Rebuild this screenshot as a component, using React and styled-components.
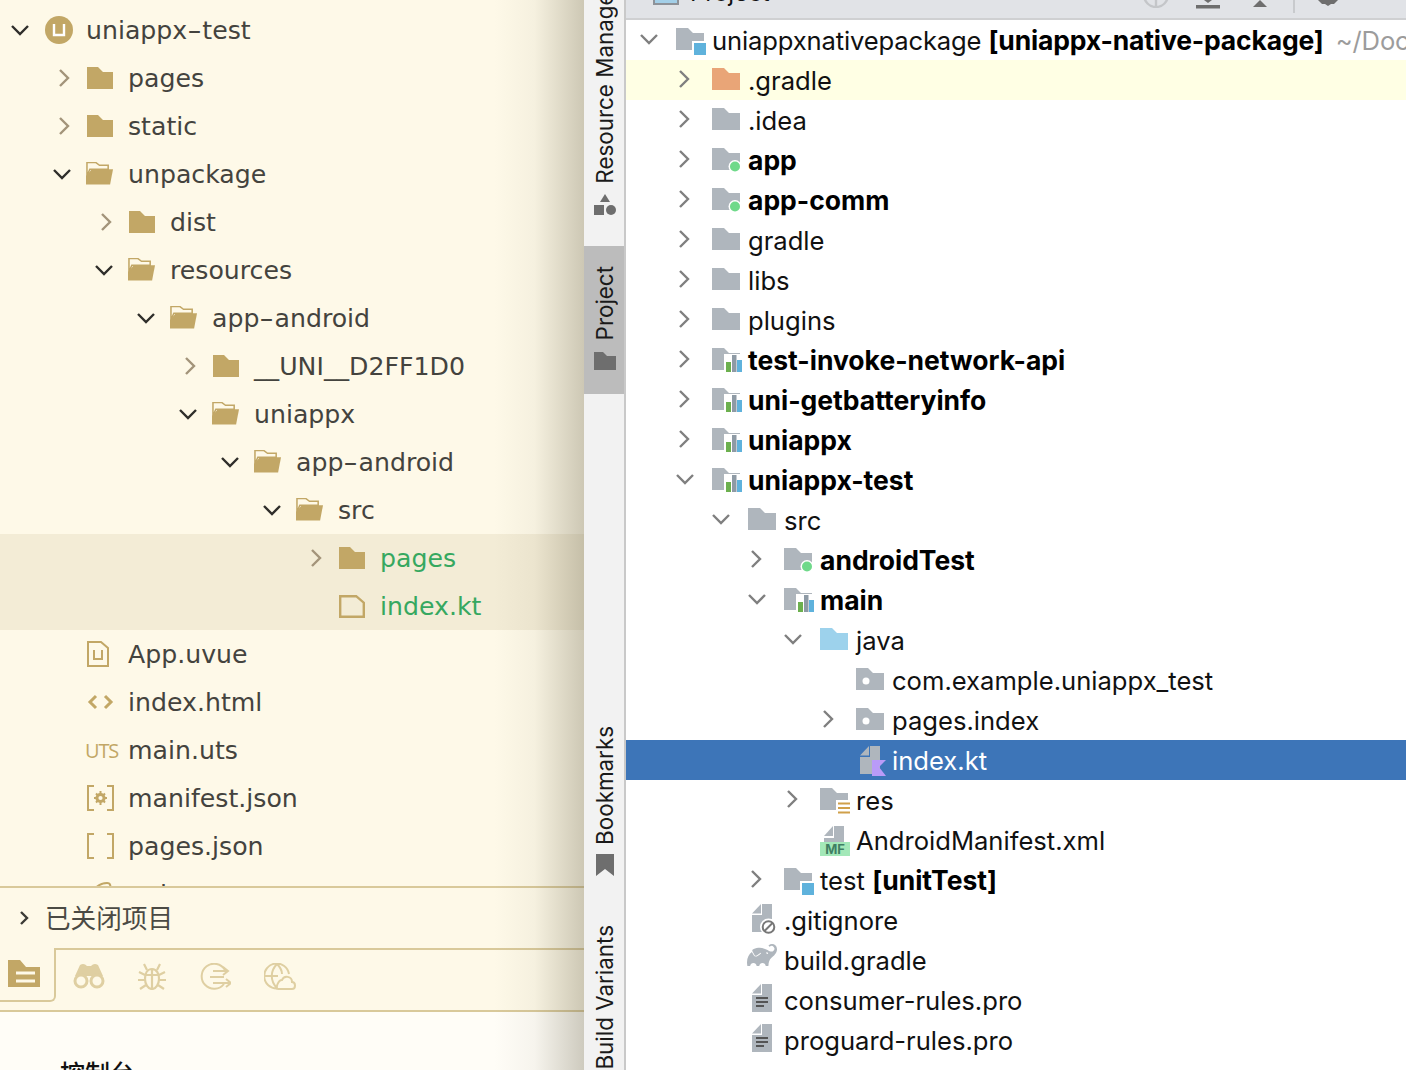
import styled, { createGlobalStyle } from "styled-components";
import { SiGradle } from "react-icons/si";

const GlobalStyle = createGlobalStyle`
  html, body {
    margin: 0;
    padding: 0;
    background: #fff;
  }
`;

const TAN = "#c2a766";
const GREY = "#afb6bd";

const leftTree = [
  { level: 0, arrow: "open", icon: "uni", name: "uniappx-test" },
  { level: 1, arrow: "closed", icon: "folder", name: "pages" },
  { level: 1, arrow: "closed", icon: "folder", name: "static" },
  { level: 1, arrow: "open", icon: "open", name: "unpackage" },
  { level: 2, arrow: "closed", icon: "folder", name: "dist" },
  { level: 2, arrow: "open", icon: "open", name: "resources" },
  { level: 3, arrow: "open", icon: "open", name: "app-android" },
  { level: 4, arrow: "closed", icon: "folder", name: "__UNI__D2FF1D0" },
  { level: 4, arrow: "open", icon: "open", name: "uniappx" },
  { level: 5, arrow: "open", icon: "open", name: "app-android" },
  { level: 6, arrow: "open", icon: "open", name: "src" },
  { level: 7, arrow: "closed", icon: "folder", name: "pages", changed: true },
  { level: 7, icon: "file", name: "index.kt", changed: true },
  { level: 1, icon: "uvue", name: "App.uvue" },
  { level: 1, icon: "code", name: "index.html" },
  { level: 1, icon: "uts", name: "main.uts" },
  { level: 1, icon: "manifest", name: "manifest.json" },
  { level: 1, icon: "brackets", name: "pages.json" },
  { level: 1, icon: "scss", name: "uni.scss" },
];

const rightTree = [
  { level: 0, arrow: "open", icon: "source", name: "uniappxnativepackage", bold: "[uniappx-native-package]", path: "~/Documents/uniappxnativepackage", tight: true },
  { level: 1, arrow: "closed", icon: "orange", name: ".gradle", tint: true },
  { level: 1, arrow: "closed", icon: "grey", name: ".idea" },
  { level: 1, arrow: "closed", icon: "android", bold: "app" },
  { level: 1, arrow: "closed", icon: "android", bold: "app-comm" },
  { level: 1, arrow: "closed", icon: "grey", name: "gradle" },
  { level: 1, arrow: "closed", icon: "grey", name: "libs" },
  { level: 1, arrow: "closed", icon: "grey", name: "plugins" },
  { level: 1, arrow: "closed", icon: "module", bold: "test-invoke-network-api" },
  { level: 1, arrow: "closed", icon: "module", bold: "uni-getbatteryinfo" },
  { level: 1, arrow: "closed", icon: "module", bold: "uniappx" },
  { level: 1, arrow: "open", icon: "module", bold: "uniappx-test" },
  { level: 2, arrow: "open", icon: "grey", name: "src" },
  { level: 3, arrow: "closed", icon: "android", bold: "androidTest" },
  { level: 3, arrow: "open", icon: "module", bold: "main" },
  { level: 4, arrow: "open", icon: "java", name: "java" },
  { level: 5, icon: "package", name: "com.example.uniappx_test" },
  { level: 5, arrow: "closed", icon: "package", name: "pages.index" },
  { level: 5, icon: "kotlin", name: "index.kt", selected: true },
  { level: 4, arrow: "closed", icon: "res", name: "res" },
  { level: 4, icon: "mf", name: "AndroidManifest.xml" },
  { level: 3, arrow: "closed", icon: "test", name: "test", bold: "[unitTest]" },
  { level: 2, icon: "ignore", name: ".gitignore" },
  { level: 2, icon: "gradle", name: "build.gradle" },
  { level: 2, icon: "text", name: "consumer-rules.pro" },
  { level: 2, icon: "text", name: "proguard-rules.pro" },
];

const FOLDER_D = "M0 0h12l5 5h11v17H0z";
const FILE_D = "M10 0h10v28H0V11h10z";

function Chevron({ open, color, dx = 0, dy = 0 }) {
  return (
    <svg width="20" height="20" viewBox="0 0 20 20" fill="none">
      <path
        d={open ? `M${2 + dx} ${6 + dy}l8 8 8-8` : `M${6 + dx} ${2 + dy}l8 8-8 8`}
        stroke={color}
        strokeWidth="2.4"
      />
    </svg>
  );
}

function LeftIcon({ type }) {
  switch (type) {
    case "uni":
      return (
        <svg width="28" height="28" viewBox="0 0 28 28">
          <circle cx="14" cy="14" r="14" fill={TAN} />
          <path d="M9 8v11h10V8" fill="none" stroke="#fff" strokeWidth="2.4" />
        </svg>
      );
    case "folder":
      return (
        <svg width="26" height="22" viewBox="0 0 26 22">
          <path d="M0 0h11l5 5h10v17H0z" fill={TAN} />
        </svg>
      );
    case "open":
      return (
        <OpenFolder width="27" height="24" viewBox="0 0 28 24">
          <path d="M1 0h9l4 3h9v4H4L1 14z" fill="none" stroke={TAN} strokeWidth="1.6" />
          <path d="M6 7h22l-3 16H0v-9z" fill={TAN} />
        </OpenFolder>
      );
    case "file":
      return (
        <svg width="26" height="23" viewBox="0 0 26 23">
          <path d="M1.2 1.2h16l7.6 6.5v14H1.2z" fill="none" stroke={TAN} strokeWidth="2.4" />
        </svg>
      );
    case "uvue":
      return (
        <svg width="22" height="26" viewBox="0 0 22 26">
          <path d="M1 1h13l7 6v18H1z" fill="none" stroke={TAN} strokeWidth="2" />
          <path d="M7 9v9h8V9" fill="none" stroke={TAN} strokeWidth="2" />
        </svg>
      );
    case "code":
      return (
        <svg width="27" height="16" viewBox="0 0 27 16">
          <path d="M9 2L3 8l6 6M18 2l6 6-6 6" fill="none" stroke={TAN} strokeWidth="3" />
        </svg>
      );
    case "uts":
      return <UtsBadge>UTS</UtsBadge>;
    case "manifest":
      return (
        <svg width="27" height="26" viewBox="0 0 27 26">
          <path d="M7 1H1v24h6M20 1h6v24h-6" fill="none" stroke={TAN} strokeWidth="2" />
          <circle cx="13.5" cy="13" r="3.6" fill="none" stroke={TAN} strokeWidth="3" />
          <path d="M13.5 6v3M13.5 17v3M7 13h3M17 13h3M9 8.500l2 2M16 15.500l2 2M18 8.500l-2 2M11 15.500l-2 2" stroke={TAN} strokeWidth="2" />
        </svg>
      );
    case "brackets":
      return (
        <svg width="27" height="26" viewBox="0 0 27 26">
          <path d="M7 1H1v24h6M20 1h6v24h-6" fill="none" stroke={TAN} strokeWidth="2" />
        </svg>
      );
    case "scss":
      return (
        <svg width="26" height="24" viewBox="0 0 26 24">
          <path d="M4 16C4 8 12 1 20 1c4 0 4 4 2 6" fill="none" stroke={TAN} strokeWidth="2" />
        </svg>
      );
    default:
      return null;
  }
}

function SideFolder({ color = GREY, children }) {
  return (
    <OverflowSvg width="28" height="28" viewBox="0 0 28 28">
      <path d={FOLDER_D} fill={color} />
      {children}
    </OverflowSvg>
  );
}

function RightIcon({ type }) {
  switch (type) {
    case "grey":
      return <SideFolder />;
    case "orange":
      return <SideFolder color="#e9a577" />;
    case "java":
      return <SideFolder color="#9dd2ec" />;
    case "source":
    case "test":
      return (
        <SideFolder>
          <rect x="16" y="13" width="15" height="15" fill="#fff" />
          <rect x="18" y="15" width="12" height="12" fill="#5fb2dc" />
        </SideFolder>
      );
    case "android":
      return (
        <SideFolder>
          <circle cx="23" cy="18.500" r="6.500" fill="#fff" />
          <circle cx="23" cy="18.500" r="5" fill="#6fd98a" />
        </SideFolder>
      );
    case "module":
      return (
        <SideFolder>
          <rect x="12" y="6" width="19" height="18" fill="#fff" />
          <rect x="14" y="14" width="5" height="10" fill="#6cb04e" />
          <rect x="20" y="7" width="4.500" height="17" fill="#8e9aa5" />
          <rect x="25" y="12" width="5" height="12" fill="#5fb2dc" />
        </SideFolder>
      );
    case "package":
      return (
        <SideFolder>
          <circle cx="10" cy="13" r="3.500" fill="#fff" />
        </SideFolder>
      );
    case "res":
      return (
        <SideFolder>
          <rect x="16" y="12" width="16" height="17" fill="#fff" />
          <path d="M18 15.500h12M18 20h12M18 24.500h12" stroke="#d0a04a" strokeWidth="2.200" />
        </SideFolder>
      );
    case "kotlin":
      return (
        <svg width="30" height="30" viewBox="0 0 30 30">
          <path d="M14 0h10v28H4V11h10z" fill={GREY} />
          <path d="M4 9.500L13 0v9.500z" fill={GREY} />
          <path d="M16 14h14l-7 7 7 9H16z" fill="#b99bf8" />
        </svg>
      );
    case "mf":
      return (
        <svg width="30" height="30" viewBox="0 0 30 30">
          <path d="M14 0h10v16H4v-4h10z" fill={GREY} />
          <path d="M4 10L13 0v10z" fill={GREY} />
          <rect y="16" width="30" height="14" fill="#a3e8b8" />
          <text x="15" y="28" textAnchor="middle" fontFamily="Inter, sans-serif" fontWeight="700" fontSize="13" fill="#3f7f63">
            MF
          </text>
        </svg>
      );
    case "ignore":
      return (
        <OverflowSvg width="26" height="32" viewBox="0 0 26 32">
          <path d={FILE_D} fill={GREY} />
          <path d="M0 9.500L9 0v9.500z" fill={GREY} />
          <circle cx="16.500" cy="23" r="8.500" fill="#fff" />
          <circle cx="16.500" cy="23" r="5.800" fill="none" stroke="#777" strokeWidth="2" />
          <path d="M12.500 27l8-8" stroke="#777" strokeWidth="2" />
        </OverflowSvg>
      );
    case "gradle":
      return <SiGradle size={30} color={GREY} />;
    case "text":
      return (
        <svg width="20" height="28" viewBox="0 0 20 28">
          <path d={FILE_D} fill={GREY} />
          <path d="M0 9.500L9 0v9.500z" fill={GREY} />
          <path d="M4 14h12M4 18h12M4 22h8" stroke="#555" strokeWidth="2" />
        </svg>
      );
    default:
      return null;
  }
}

function LeftRow({ item }) {
  // the hyphen of the macOS face is a lot wider than the one of this font
  const parts = item.name.split("-");
  return (
    <TreeRow $level={item.level} $changed={item.changed}>
      <ArrowSlot>
        {item.arrow && (
          <Chevron
            open={item.arrow === "open"}
            color={item.arrow === "open" ? "#2f2e2a" : "#a3947a"}
            dx={item.arrow === "open" ? -1 : 1}
          />
        )}
      </ArrowSlot>
      <IconSlot $flush={item.icon === "uts"}>
        <LeftIcon type={item.icon} />
      </IconSlot>
      <TreeName $changed={item.changed}>
        {parts[0]}
        {parts[1] && (
          <>
            <Dash>-</Dash>
            {parts[1]}
          </>
        )}
      </TreeName>
    </TreeRow>
  );
}

function RightRow({ item }) {
  return (
    <ProjectRow $level={item.level} $tint={item.tint} $selected={item.selected}>
      <ProjectArrow>
        {item.arrow && (
          <Chevron
            open={item.arrow === "open"}
            color="#7f7f7f"
            dx={item.arrow === "open" ? 0 : -1}
            dy={-1}
          />
        )}
      </ProjectArrow>
      <ProjectIcon $type={item.icon}>
        <RightIcon type={item.icon} />
      </ProjectIcon>
      <ProjectName $selected={item.selected} $tight={item.tight}>
        {item.name}
        {item.name && item.bold ? " " : ""}
        {item.bold && <b>{item.bold}</b>}
        {item.path && <PathHint>{item.path}</PathHint>}
      </ProjectName>
    </ProjectRow>
  );
}

export default function App() {
  return (
    <Page>
      <GlobalStyle />
      <Explorer>
        <FileTree>
          {leftTree.map((item, i) => (
            <LeftRow key={i} item={item} />
          ))}
        </FileTree>
        <ClosedRow>
          <ClosedArrow>
            <svg width="12" height="18" viewBox="0 0 12 18" fill="none">
              <path d="M3 3l6 6-6 6" stroke="#3c3b36" strokeWidth="2.400" />
            </svg>
          </ClosedArrow>
          <ClosedLabel>已关闭项目</ClosedLabel>
        </ClosedRow>
        <TabBar>
          <ActiveTab>
            <svg width="32" height="27" viewBox="0 0 32 27">
              <path d="M0 0h12l6 7h14v20H0z" fill={TAN} />
              <path d="M8 13h19M8 21h19" stroke="#fef9e8" strokeWidth="3" />
            </svg>
          </ActiveTab>
          <TabIcons>
            <svg width="32" height="26" viewBox="0 0 32 26" fill="none">
              <path d="M7 2c3-2 5-1 7 1h4c2-2 4-3 7-1l5 11H2z" fill="#dfcfa2" />
              <circle cx="8" cy="18" r="6" fill="#fef9e8" stroke="#dfcfa2" strokeWidth="3" />
              <circle cx="24" cy="18" r="6" fill="#fef9e8" stroke="#dfcfa2" strokeWidth="3" />
            </svg>
            <svg width="28" height="27" viewBox="0 0 28 27" fill="none" stroke="#dfcfa2" strokeWidth="2.200">
              <path d="M14 6c-5 0-7 5-7 10s3 10 7 10 7-5 7-10-2-10-7-10zM14 6v20M7 12h14" />
              <path d="M9 7L6 1M19 7l3-6M7 12L1 9M21 12l6-3M7 17H0M21 17h7M8 22l-6 4M20 22l6 4" />
            </svg>
            <svg width="32" height="27" viewBox="0 0 32 27" fill="none" stroke="#dfcfa2" strokeWidth="2">
              <path d="M26 7A12.500 12.500 0 1 0 25 21" />
              <path d="M14 8h14M24 4l5 4-5 4M11 14h14M14 20h17M27 16l5 4-5 4" />
            </svg>
            <svg width="32" height="27" viewBox="0 0 32 27" fill="none" stroke="#dfcfa2" strokeWidth="2">
              <path d="M13 25.500A12.500 12.500 0 1 1 25 11M13 1c-7 7-7 17 0 24M13 1c3 3 5 6 5 10M1 13h13" />
              <path d="M14 26h14c4 0 4-7 0-7 0-6-8-7-10-2-4 0-7 9-4 9z" />
            </svg>
          </TabIcons>
        </TabBar>
        <ConsolePanel>控制台</ConsolePanel>
      </Explorer>

      <ToolStrip>
        <ResourceTool>
          <ToolLabel>Resource Manager</ToolLabel>
          <svg width="22" height="22" viewBox="0 0 22 22" fill="#6e6e6e">
            <path d="M11 0l5 8H6z" />
            <rect y="11" width="10" height="10" />
            <circle cx="17" cy="16" r="5" />
          </svg>
        </ResourceTool>
        <ProjectTool>
          <ToolLabel>Project</ToolLabel>
          <svg width="22" height="18" viewBox="0 0 22 18" fill="#6e6e6e">
            <path d="M0 0h9l4 4h9v14H0z" />
          </svg>
        </ProjectTool>
        <BookmarksTool>
          <ToolLabel>Bookmarks</ToolLabel>
          <svg width="18" height="22" viewBox="0 0 18 22" fill="#6e6e6e">
            <path d="M0 0h18v22l-9-7-9 7z" />
          </svg>
        </BookmarksTool>
        <VariantsTool>
          <ToolLabel>Build Variants</ToolLabel>
        </VariantsTool>
      </ToolStrip>

      <ProjectWindow>
        <Toolbar>
          <ViewIcon />
          <ToolbarTitle>Project</ToolbarTitle>
          <ToolbarActions>
            <ActionIcon width="26" height="8" viewBox="0 0 26 8" fill="none" stroke="#c4c6c9" strokeWidth="2.400">
              <circle cx="13" cy="-5" r="12" />
              <path d="M13 -6v14" />
            </ActionIcon>
            <ActionIcon $gap={27} width="24" height="10" viewBox="0 0 24 10" fill="#6e6e6e">
              <rect y="5" width="24" height="3.500" />
              <path d="M8 0h8l-4 3z" />
            </ActionIcon>
            <ActionIcon $gap={33} width="14" height="7" viewBox="0 0 14 7" fill="#6e6e6e">
              <path d="M7 0l7 7H0z" />
            </ActionIcon>
            <ToolbarDivider />
            <ActionIcon $gap={22} width="22" height="6" viewBox="0 0 22 6" fill="#6e6e6e">
              <path d="M1 0h20l-4 4h-3l-3 2-3-2H5z" />
            </ActionIcon>
          </ToolbarActions>
        </Toolbar>
        <ProjectTree>
          {rightTree.map((item, i) => (
            <RightRow key={i} item={item} />
          ))}
        </ProjectTree>
      </ProjectWindow>
    </Page>
  );
}

const Page = styled.div`
  display: flex;
  width: 1408px;
  height: 1070px;
  overflow: hidden;
  background: #fff;
`;

const OverflowSvg = styled.svg`
  overflow: visible;
`;

const OpenFolder = styled.svg`
  margin-left: -1px;
`;

const Explorer = styled.aside`
  position: relative;
  display: flex;
  flex-direction: column;
  width: 584px;
  flex-shrink: 0;
  height: 1070px;
  background: #fef9e8;
  overflow: hidden;

  /* shadow of the window lying on top */
  &::after {
    content: "";
    position: absolute;
    top: 0;
    right: 0;
    bottom: 0;
    width: 90px;
    pointer-events: none;
    background: linear-gradient(
      to right,
      rgba(110, 104, 80, 0) 0%,
      rgba(110, 104, 80, 0.06) 45%,
      rgba(110, 104, 80, 0.34) 100%
    );
  }
`;

const FileTree = styled.div`
  height: 880px;
  padding-top: 6px;
  flex-shrink: 0;
  overflow: hidden;
`;

const TreeRow = styled.div`
  display: flex;
  align-items: center;
  height: 48px;
  padding-left: ${(p) => p.$level * 42}px;
  background: ${(p) => (p.$changed ? "#f3ecd6" : "transparent")};
`;

const ArrowSlot = styled.span`
  display: flex;
  justify-content: center;
  align-items: center;
  width: 42px;
  flex-shrink: 0;
`;

const IconSlot = styled.span`
  display: flex;
  align-items: center;
  width: 44px;
  padding-left: ${(p) => (p.$flush ? 1 : 3)}px;
  box-sizing: border-box;
  flex-shrink: 0;
`;

const TreeName = styled.span`
  font-family: "DejaVu Sans", "Open Sans", sans-serif;
  font-size: 25.2px;
  white-space: nowrap;
  color: ${(p) => (p.$changed ? "#36a860" : "#44433e")};
`;

const Dash = styled.span`
  display: inline-block;
  margin: 0 3px;
  transform: scaleX(1.6);
`;

const UtsBadge = styled.span`
  font-family: "Open Sans", sans-serif;
  font-size: 20px;
  letter-spacing: -1.2px;
  color: ${TAN};
`;

const ClosedRow = styled.div`
  display: flex;
  align-items: center;
  height: 60px;
  flex-shrink: 0;
  border-top: 2px solid #d9c99a;
  font-family: "Noto Sans CJK SC", sans-serif;
  font-size: 25.600px;
  color: #4b4a44;
`;

const ClosedArrow = styled.span`
  display: flex;
  justify-content: center;
  width: 45px;
  padding-left: 3px;
  box-sizing: border-box;
`;

const ClosedLabel = styled.span`
  padding-bottom: 4px;
`;

const TabBar = styled.div`
  display: flex;
  height: 64px;
  flex-shrink: 0;
  border-bottom: 2px solid #d9c99a;
  box-sizing: border-box;
`;

const ActiveTab = styled.div`
  display: flex;
  align-items: flex-start;
  justify-content: center;
  width: 56px;
  height: 54px;
  padding: 12px 6px 0 0;
  box-sizing: border-box;
  flex-shrink: 0;
  border-right: 2px solid #d9c99a;
  border-bottom: 2px solid #d9c99a;
  border-bottom-right-radius: 6px;
`;

const TabIcons = styled.div`
  display: flex;
  flex: 1;
  align-items: flex-start;
  gap: 33px;
  padding: 13px 0 0 19px;
  border-top: 2px solid #d9c99a;
  margin-left: -2px;
`;

const ConsolePanel = styled.div`
  flex: 1;
  padding: 42px 0 0 60px;
  background: #fffdf7;
  font-family: "Noto Sans CJK SC", sans-serif;
  font-size: 25px;
  font-weight: 500;
  line-height: 36px;
  color: #111;
`;

const ToolStrip = styled.nav`
  display: flex;
  flex-direction: column;
  width: 42px;
  height: 1070px;
  flex-shrink: 0;
  box-sizing: border-box;
  background: #f2f2f2;
  border-right: 2px solid #c9c9c9;
  overflow: hidden;
`;

const ToolButton = styled.div`
  display: flex;
  flex-direction: column;
  align-items: center;
  gap: 10px;
  width: 40px;
  padding-left: 2px;
  flex-shrink: 0;
  box-sizing: border-box;

  svg {
    flex-shrink: 0;
  }
`;

const ResourceTool = styled(ToolButton)`
  height: 246px;
  justify-content: flex-end;
  padding-bottom: 30px;
`;

const ProjectTool = styled(ToolButton)`
  height: 148px;
  justify-content: flex-end;
  gap: 12px;
  padding-bottom: 24px;
  background: #bcbcbc;
`;

const BookmarksTool = styled(ToolButton)`
  height: 483px;
  justify-content: flex-end;
  gap: 9px;
  padding-bottom: 1px;
`;

const VariantsTool = styled(ToolButton)`
  margin-top: 48px;
`;

const ToolLabel = styled.span`
  writing-mode: vertical-rl;
  transform: rotate(180deg);
  font-family: Inter, "Liberation Sans", sans-serif;
  font-size: 22.4px;
  line-height: 38px;
  white-space: nowrap;
  color: #1a1a1a;
`;

const ProjectWindow = styled.main`
  display: flex;
  flex-direction: column;
  width: 780px;
  flex-shrink: 0;
  height: 1070px;
  overflow: hidden;
`;

const Toolbar = styled.header`
  display: flex;
  align-items: flex-start;
  height: 18px;
  flex-shrink: 0;
  padding-left: 27px;
  background: #e1e3e7;
  border-bottom: 2px solid #cfd0d2;
  overflow: hidden;
`;

const ViewIcon = styled.span`
  width: 26px;
  height: 20px;
  margin-top: -15px;
  box-sizing: border-box;
  background: #a3cfe8;
  border: 2px solid #8d9299;
  flex-shrink: 0;
`;

const ToolbarTitle = styled.span`
  margin: -24px 0 0 11px;
  font-family: Inter, "Liberation Sans", sans-serif;
  font-size: 24px;
  line-height: 34px;
  color: #111;
`;

const ToolbarActions = styled.div`
  display: flex;
  align-items: flex-start;
  margin-left: auto;
  margin-right: 67px;
`;

const ActionIcon = styled.svg`
  margin-left: ${(p) => p.$gap ?? 0}px;
  flex-shrink: 0;
`;

const ToolbarDivider = styled.span`
  width: 2px;
  height: 13px;
  margin-left: 26px;
  background: #c8cacd;
`;

const ProjectTree = styled.div`
  display: flex;
  flex-direction: column;
`;

const ProjectRow = styled.div`
  display: flex;
  align-items: center;
  height: 40px;
  flex-shrink: 0;
  padding-left: ${(p) => p.$level * 36}px;
  background: ${(p) =>
    p.$selected ? "#3d75b8" : p.$tint ? "#ffffe4" : "transparent"};
`;

const ProjectArrow = styled.span`
  display: flex;
  justify-content: center;
  width: 46px;
  flex-shrink: 0;
`;

const iconInset = {
  text: 8,
  ignore: 8,
  gradle: 3,
};

const iconTop = {
  text: 4,
  ignore: 4,
  gradle: 0,
  mf: 6,
  kotlin: 6,
};

const ProjectIcon = styled.span`
  display: flex;
  align-items: flex-start;
  width: 40px;
  height: 40px;
  padding-left: ${(p) => iconInset[p.$type] ?? 4}px;
  padding-top: ${(p) => iconTop[p.$type] ?? 8}px;
  box-sizing: border-box;
  flex-shrink: 0;
`;

const ProjectName = styled.span`
  font-family: Inter, "Liberation Sans", sans-serif;
  font-size: 25.6px;
  letter-spacing: ${(p) => (p.$tight ? "-0.15px" : "normal")};
  white-space: nowrap;
  color: ${(p) => (p.$selected ? "#fff" : "#111")};

  b {
    font-size: 26.5px;
    font-weight: 700;
    color: #000;
  }
`;

const PathHint = styled.span`
  margin-left: 12px;
  color: #9c9c9c;
`;
